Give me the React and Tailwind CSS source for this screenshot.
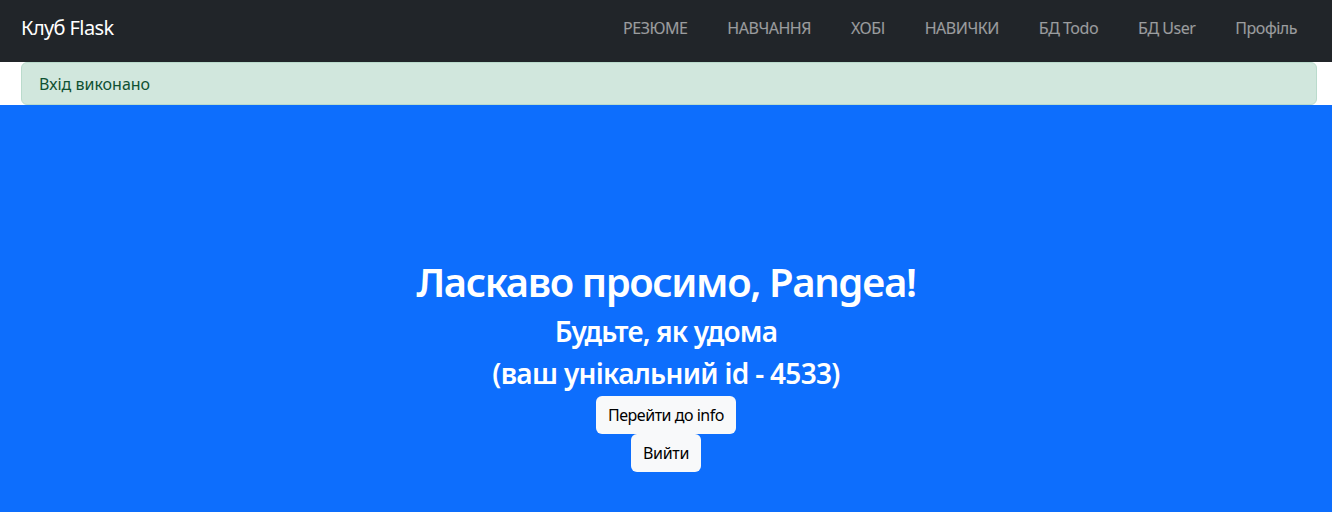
import React from 'react'

const links = ['РЕЗЮМЕ', 'НАВЧАННЯ', 'ХОБІ', 'НАВИЧКИ', 'БД Todo', 'БД User', 'Профіль']

export default function App() {
  return (
    <div className="min-h-screen bg-[#0d6efd] font-['Noto_Sans',sans-serif]">
      {/* навбар */}
      <nav className="flex h-[62px] items-center justify-between bg-[#212529] pb-[7px] pl-[21px] pr-[15px]">
        <a className="text-[20px] tracking-[-0.03em] text-white">Клуб Flask</a>
        <ul className="flex">
          {links.map(l => (
            <li key={l} className="px-5 text-[16px] tracking-[-0.03em] text-white/55">{l}</li>
          ))}
        </ul>
      </nav>

      <div className="bg-white pl-[21px] pr-[15px]">
        <div className="flex h-[43px] items-center rounded-md border border-[#badbcc] bg-[#d1e7dd] px-[17px] text-[16px] text-[#0f5132]">
          Вхід виконано
        </div>
      </div>

      <main className="flex flex-col items-center pt-[153px] text-center text-white">
        <h1 className="mb-2 text-[40px] font-semibold leading-[48px] tracking-[-0.035em]">Ласкаво просимо, Pangea!</h1>
        <h3 className="mb-2 text-[28px] font-semibold leading-[34px] tracking-[-0.03em]">Будьте, як удома</h3>
        <h3 className="mb-[6px] text-[28px] font-semibold leading-[34px] tracking-[-0.025em]">(ваш унікальний id - 4533)</h3>
        <button className="h-[38px] rounded-md bg-[#f8f9fa] px-3 text-[16px] tracking-[-0.03em] text-[#000]">Перейти до info</button>
        <button className="h-[38px] rounded-md bg-[#f8f9fa] px-3 text-[16px] tracking-[-0.02em] text-[#000]">Вийти</button>
      </main>
    </div>
  )
}
